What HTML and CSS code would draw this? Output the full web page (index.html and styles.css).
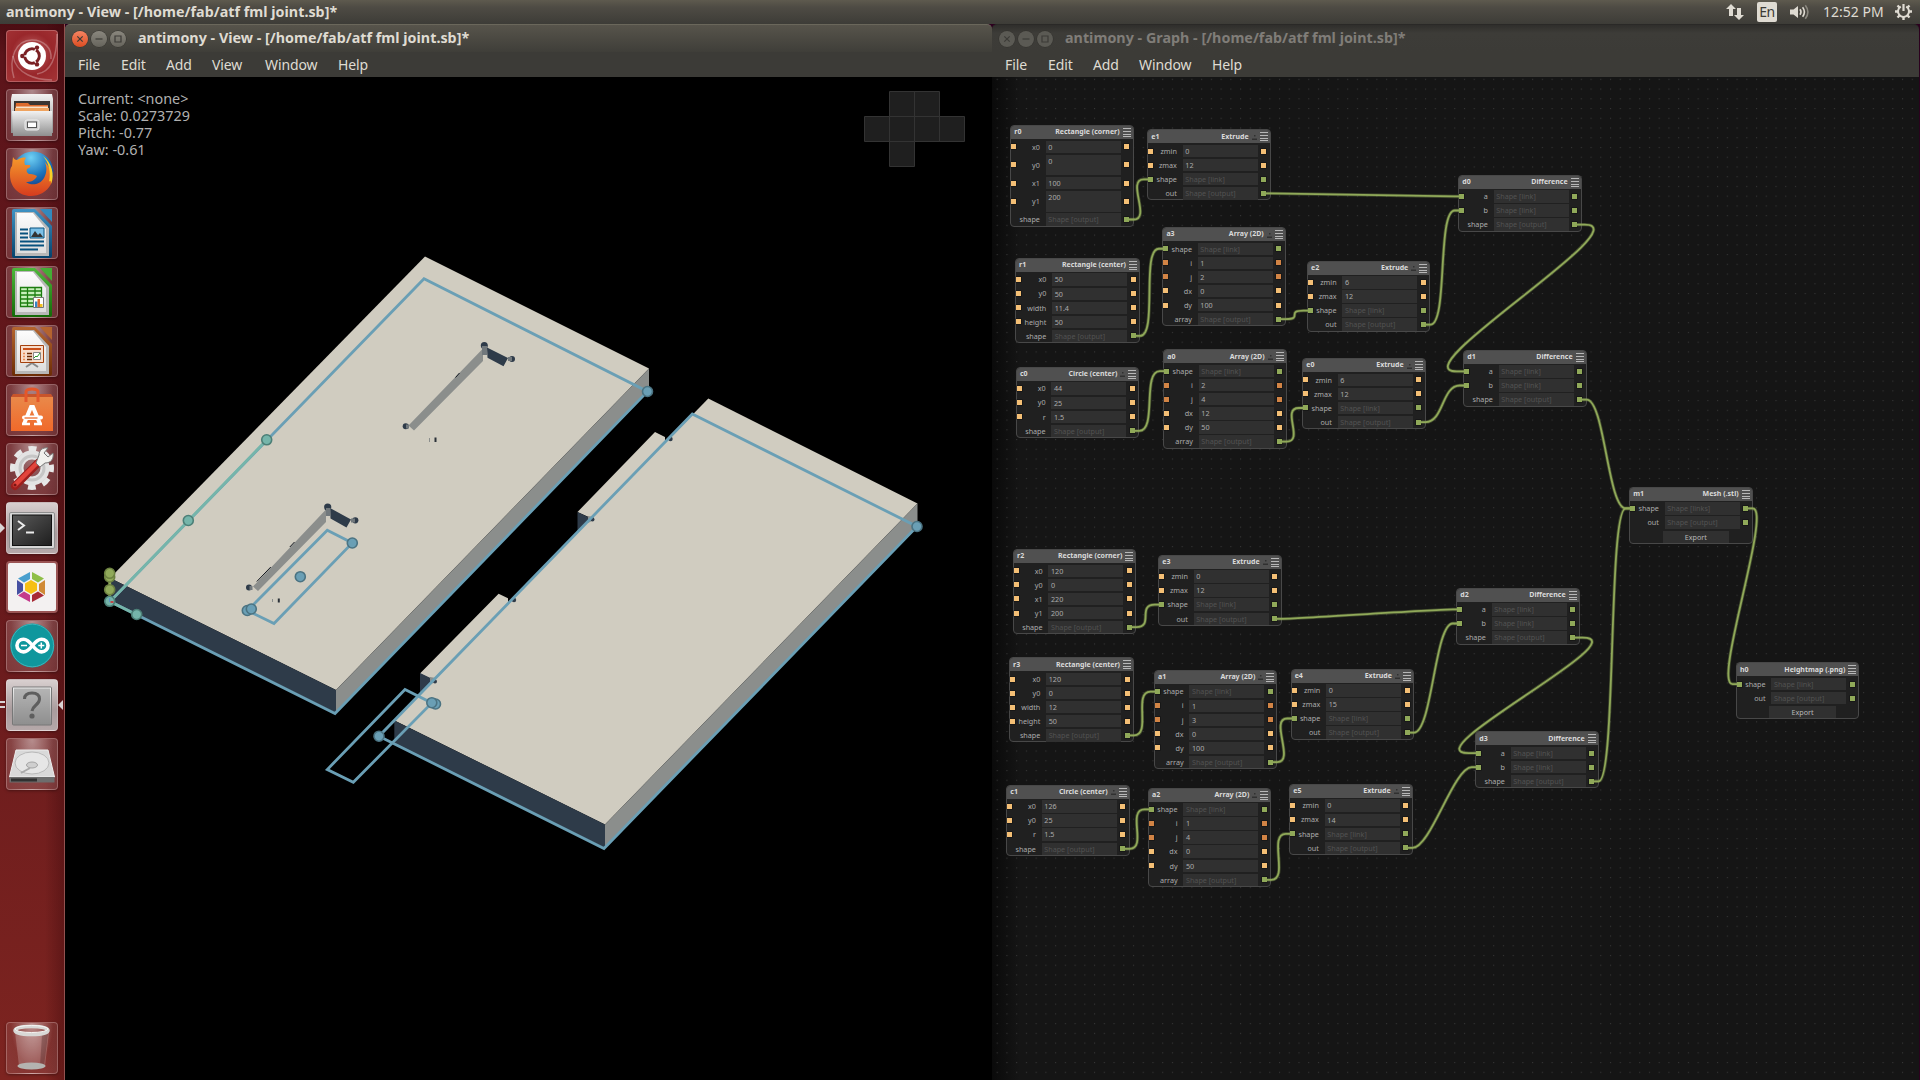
FILE: index.html
```html
<!DOCTYPE html>
<html lang="en">
<head>
<meta charset="utf-8">
<title>antimony</title>
<link rel="stylesheet" href="styles.css">
</head>
<body>
<svg class="defs" width="0" height="0" aria-hidden="true">
  <defs>
    <linearGradient id="metal" x1="0" y1="0" x2="0" y2="1"><stop offset="0" stop-color="#f2f2f2"/><stop offset="1" stop-color="#8f8f8f"/></linearGradient>
    <linearGradient id="paper" x1="0" y1="0" x2="0" y2="1"><stop offset="0" stop-color="#fdfdfd"/><stop offset="1" stop-color="#dedede"/></linearGradient>
    <linearGradient id="blue" x1="0" y1="0" x2="0" y2="1"><stop offset="0" stop-color="#3f93c4"/><stop offset="1" stop-color="#04426c"/></linearGradient>
    <linearGradient id="green" x1="0" y1="0" x2="0" y2="1"><stop offset="0" stop-color="#4db83a"/><stop offset="1" stop-color="#136a08"/></linearGradient>
    <linearGradient id="brown" x1="0" y1="0" x2="0" y2="1"><stop offset="0" stop-color="#b5652f"/><stop offset="1" stop-color="#6b2c05"/></linearGradient>
    <linearGradient id="orange" x1="0" y1="0" x2="0" y2="1"><stop offset="0" stop-color="#e9894a"/><stop offset="1" stop-color="#f0692a"/></linearGradient>
    <linearGradient id="fox" x1="0" y1="0" x2="0" y2="1"><stop offset="0" stop-color="#f59a2c"/><stop offset="1" stop-color="#d63c1e"/></linearGradient>
    <radialGradient id="globe" cx=".45" cy=".15" r=".9"><stop offset="0" stop-color="#6fd0f4"/><stop offset=".5" stop-color="#1c74bc"/><stop offset="1" stop-color="#15206a"/></radialGradient>
    <linearGradient id="screen" x1="0" y1="0" x2="1" y2="1"><stop offset="0" stop-color="#5a5a5a"/><stop offset=".5" stop-color="#3c3c3c"/><stop offset="1" stop-color="#1e1e1e"/></linearGradient>
    <pattern id="dots" x="1006.4" y="78.8" width="9.735" height="9.735" patternUnits="userSpaceOnUse"><rect width="1.1" height="1.1" fill="#363636"/></pattern>
  </defs>
</svg>

<header class="panel">
  <div class="panel-title">antimony - View - [/home/fab/atf fml joint.sb]*</div>
  <div class="indicators">
    <svg class="ind-net" width="18" height="18" viewBox="0 0 18 18"><path fill="#dfdbd2" d="M5 1l5 5H7v7H3V6H0zM13 17l5-5h-3V5h-4v7H8z"/></svg>
    <span class="ind-lang">En</span>
    <svg class="ind-vol" width="20" height="16" viewBox="0 0 20 16"><path fill="#dfdbd2" d="M0 5.500h3.500L8 2v12l-4.500-3.500H0z"/><g fill="none" stroke="#dfdbd2" stroke-width="1.600"><path d="M10 5.300q2 2.700 0 5.400"/><path d="M12.600 3.300q3.600 4.700 0 9.400"/><path stroke="#8b887f" d="M15.300 1.300q5.200 6.700 0 13.400"/></g></svg>
    <span class="clock">12:52 PM</span>
    <svg class="ind-gear" width="17" height="17" viewBox="0 0 17 17"><g fill="none" stroke="#dfdbd2"><path stroke-width="2.200" d="M8.500 1v7"/><path stroke-width="2" d="M5.800 3.600a5.500 5.500 0 1 0 5.400 0"/><path stroke-width="2.400" d="M8.500 14v3M0 8.500h3M14 8.500h3M2.500 14.500l2-2M14.500 14.500l-2-2M2.500 2.500l2 2M14.500 2.500l-2 2"/></g></svg>
  </div>
</header>

<main class="desktop">
  <nav class="launcher">
    <div class="tile tile-dash"><svg viewBox="0 0 52 52"><g fill="none" stroke="#ffffff" stroke-opacity=".28" stroke-width="1.500"><path d="M8 48C2 28 10 10 26 10c12 0 20 8 19 19"/><path d="M46 50C30 50 10 44 7 26M51 4c0 24-6 38-20 40"/></g><circle cx="26" cy="26" r="14" fill="#fff"/><circle cx="26" cy="26" r="7.300" fill="none" stroke="#7a2024" stroke-width="3"/><g stroke="#fff" stroke-width="1.300"><path d="M26 26h-10M26 26l5-9M26 26l5 9"/></g><circle cx="26" cy="26" r="5.400" fill="#fff"/><g fill="#7a2024"><circle cx="16.300" cy="26" r="2.200"/><circle cx="31" cy="17.600" r="2.200"/><circle cx="31" cy="34.400" r="2.200"/></g></svg></div>
    <div class="tile"><svg viewBox="0 0 52 52"><path d="M6 5h40l1 5v34H5V10z" fill="url(#metal)"/><path d="M8 12h36v10H8z" fill="#3a3532"/><path d="M10 14h12l2 2h18v6H9z" fill="#dd6b2d"/><path d="M10 17.500h32v4H10z" fill="#f7e3cb"/><path d="M9 19h34v3H9z" fill="#efa35f"/><path d="M6 22h40v25H7z" fill="url(#metal)"/><rect x="19" y="31" width="14" height="10" rx="2" fill="#ccc" stroke="#eee"/><rect x="21.500" y="33" width="9" height="5.500" fill="#fff" stroke="#555"/></svg></div>
    <div class="tile"><svg viewBox="0 0 52 52"><circle cx="27" cy="24" r="20.500" fill="url(#globe)"/><path fill="url(#fox)" d="M7 9c1 2 2 3 4 3 3-2 6-3 9-2-2 2-2 4-1 7h5c1 2-1 3-3 4-1 2 0 4 2 5 2 0 4 0 8 2-2 5-7 6-11 6 5 4 14 3 18-4 3-5 3-11 1-16 6 6 9 16 6 22-4 8-12 12-20 12C13 48 4 39 4 27c0-4 0-7 2-9z"/><path fill="#fbd026" d="M37 8c9 7 12 19 8 28 0-4-1-4-2-2 2-10 0-19-6-26z"/></svg></div>
    <div class="tile"><svg viewBox="0 0 52 52"><path fill="url(#blue)" d="M8 2h21l17 17v30q0 2-2 2H8q-2 0-2-2V4q0-2 2-2z"/><path fill="#3389bd" d="M34 2h12v13z"/><path fill="#b8b8b8" d="M9 5h19l15 16v28H9z"/><path fill="url(#paper)" d="M11 6h16l13 16v24H11z"/><path d="M14 22.500h8M14 26.500h8M14 30.500h8M14 34.500h24M14 38.500h24M14 42.500h18" stroke="#08527e" stroke-width="2"/><path d="M24 21h14v10H24z" fill="#7dc1e8" stroke="#08527e"/><path d="M25 30l4-6 3 4 2-2 3 4z" fill="#333"/></svg></div>
    <div class="tile"><svg viewBox="0 0 52 52"><path fill="url(#green)" d="M8 2h21l17 17v30q0 2-2 2H8q-2 0-2-2V4q0-2 2-2z"/><path fill="#44ad35" d="M34 2h12v13z"/><path fill="#b8b8b8" d="M9 5h19l15 16v28H9z"/><path fill="url(#paper)" d="M11 6h16l13 16v24H11z"/><path d="M14 21h22v20H14z" fill="#c8f0bc"/><path d="M14.500 21.500h21v19h-21zM14 25h22M14 29h22M14 33h22M14 37h22M21.500 21v20M29 21v20" fill="none" stroke="#1c7d10" stroke-width="1.300"/><path d="M27.500 31.500h10v10h-10z" fill="#fff" stroke="#777"/><path d="M29 35.500h2.500V41H29z" fill="#3585c6"/><path d="M31.500 33H34v8h-2.500z" fill="#de6a2a"/><path d="M34 38h2.500v3H34z" fill="#f2c01c"/></svg></div>
    <div class="tile"><svg viewBox="0 0 52 52"><path fill="url(#brown)" d="M8 2h21l17 17v30q0 2-2 2H8q-2 0-2-2V4q0-2 2-2z"/><path fill="#b4632f" d="M34 2h12v13z"/><path fill="#b8b8b8" d="M9 5h19l15 16v28H9z"/><path fill="url(#paper)" d="M11 6h16l13 16v24H11z"/><path d="M20 42l6-4 6 4" fill="none" stroke="#888" stroke-width="2"/><path d="M14.500 20.500h23v17h-23z" fill="#f7ddcb" stroke="#a4410e"/><path d="M17 24h18" stroke="#c9501a" stroke-width="2"/><path d="M21 28.500h5M21 31.500h5M21 34.500h5" stroke="#6b2c05" stroke-width="1.600"/><path d="M17 28.500h2M17 31.500h2M17 34.500h2" stroke="#e78a53" stroke-width="1.600"/><path d="M27.500 27.500h7v7h-7z" fill="#fff" stroke="#888"/><path d="M28 33l2-2 1 1 3-4" stroke="#2b9a2b" fill="none"/></svg></div>
    <div class="tile"><svg viewBox="0 0 52 52"><path d="M5 13h42v34H5z" fill="url(#orange)"/><path d="M5 13h42l-2-3H7z" fill="#c8542b"/><path d="M20 18V8q0-3 6-3t6 3v10" fill="none" stroke="#e4572a" stroke-width="3"/><path d="M18 40l7-17h2l7 17M21 34h10" fill="none" stroke="#fff" stroke-width="4"/><path d="M18 33.500h17" stroke="#fff" stroke-width="4" stroke-linecap="round"/><path d="M18.500 34h13" stroke="#ec6c2c" stroke-width="1.300"/><path d="M16 40h8M28 40h8" stroke="#fff" stroke-width="2.500"/></svg></div>
    <div class="tile"><svg viewBox="0 0 52 52"><circle cx="26" cy="25" r="19.500" fill="none" stroke="#e7e7e7" stroke-width="5" stroke-dasharray="8 7.300" stroke-dashoffset="4"/><circle cx="26" cy="25" r="13" fill="none" stroke="#e3e3e3" stroke-width="9"/><circle cx="26" cy="25" r="12" fill="none" stroke="#c6c6c6" stroke-width="3"/><path d="M9 43L32 20" stroke="#9d1f1d" stroke-width="8" stroke-linecap="round"/><path d="M9 42L31 20" stroke="#e2453c" stroke-width="4.500" stroke-linecap="round"/><path d="M30 20l4 4 5-4c6 0 9-4 8-10l-5 4-4-4 4-5c-6-1-9 3-9 7z" fill="#f1f1ee" stroke="#777"/><circle cx="9" cy="42" r="1.600" fill="#781614"/></svg></div>
    <div class="tile tile-lit"><svg viewBox="0 0 52 52"><rect x="3.500" y="10.500" width="45" height="36" rx="1.500" fill="#d6d6d6" stroke="#8e8e8e"/><rect x="6.500" y="13" width="39" height="30.500" fill="url(#screen)" stroke="#111"/><path d="M12 19l6 4.500-6 4.500" fill="none" stroke="#ececec" stroke-width="2"/><path d="M20 30.500h8" stroke="#ececec" stroke-width="2"/></svg><i class="run run-one"></i></div>
    <div class="tile tile-white"><svg viewBox="0 0 52 52"><path fill="#f6c015" d="M25 19l6 3.500v7L25 33l-6-3.500v-7z"/><path fill="#4a9fce" d="M24 11v7l-6 3.500L12 17.500z"/><path fill="#8fbf47" d="M26 11v7l6 3.500 6-4z"/><path fill="#4650a2" d="M11 19l6 4v7l-6 4z"/><path fill="#d08a35" d="M39 19l-6 4v7l6 4z"/><path fill="#c43a8c" d="M24 41v-7l-6-3.500-6 4z"/><path fill="#a82a35" d="M26 41v-7l6-3.500 6 4z"/></svg></div>
    <div class="tile"><svg viewBox="0 0 52 52"><circle cx="26.300" cy="25.500" r="22" fill="#0f979d"/><circle cx="26.300" cy="25.500" r="21.300" fill="none" stroke="#3fb3b8"/><path d="M26.500 25.500c-3-4-5.500-6.300-9-6.300a6.500 6.300 0 0 0 0 12.700c3.500 0 6-2.500 9-6.400 3-4 5.500-6.300 9-6.300a6.500 6.300 0 0 1 0 12.700c-3.500 0-6-2.500-9-6.400z" fill="none" stroke="#fff" stroke-width="3.600"/><path d="M15 25.500h6M32.300 25.500h6M35.300 22.500v6" stroke="#fff" stroke-width="1.500"/></svg></div>
    <div class="tile tile-lit"><svg viewBox="0 0 52 52"><rect x="6.500" y="8" width="39" height="38" rx="1" fill="url(#metal)" stroke="#777"/><rect x="8" y="9.500" width="36" height="35" fill="#8e8e8e" opacity=".6"/><path d="M18.500 20q0-6 7.500-6t7.500 6q0 3-3.500 6t-4 6" fill="none" stroke="#5e5e5e" stroke-width="3"/><circle cx="26" cy="37" r="2.600" fill="#5e5e5e"/></svg><i class="run run-two"></i><i class="run run-focus"></i></div>
    <div class="tile"><svg viewBox="0 0 52 52"><path d="M10 12h32l6.500 27h-45z" fill="#d9d9d9" stroke="#eee"/><path d="M3.500 39h45v5.500h-45z" fill="#6d6d6d"/><path d="M5 40.500h26v3H5z" fill="#303030"/><ellipse cx="26" cy="25" rx="17" ry="11" fill="#e6e6e6" stroke="#b9b9b9"/><ellipse cx="26" cy="27" rx="5.500" ry="3" fill="#cfcfcf" stroke="#a4a4a4"/><path d="M24 30l-9 5" stroke="#aaa" stroke-width="2"/></svg></div>
    <div class="tile tile-trash"><svg viewBox="0 0 52 52"><path d="M9 10h34l-4 34q-14 5-26 0z" fill="#fff" fill-opacity=".2"/><path d="M36 13l6-1-4 32h-4z" fill="#2a0a0a" fill-opacity=".25"/><ellipse cx="25.500" cy="44" rx="14" ry="3.500" fill="#b4b4b0"/><ellipse cx="25.500" cy="8.500" rx="16.500" ry="4" fill="none" stroke="#d8d8d6" stroke-width="3.500"/><ellipse cx="25.500" cy="7" rx="16.500" ry="3.500" fill="none" stroke="#f6f6f4"/></svg></div>
  </nav>

  <section class="window window-view">
    <div class="titlebar">
      <span class="btn btn-close"><svg viewBox="0 0 16 16"><path d="M5.300 5.300l5.400 5.400M10.700 5.300l-5.400 5.400"/></svg></span>
      <span class="btn"><svg viewBox="0 0 16 16"><path d="M4.500 8h7"/></svg></span>
      <span class="btn"><svg viewBox="0 0 16 16"><path d="M5 5h6v6H5z"/></svg></span>
      <h1 class="title">antimony - View - [/home/fab/atf fml joint.sb]*</h1>
    </div>
    <div class="menubar"><span class="m-file">File</span><span class="m-edit">Edit</span><span class="m-add">Add</span><span class="m-view">View</span><span class="m-window">Window</span><span>Help</span></div>
    <div class="viewport">
      <svg class="scene" width="927" height="1003" viewBox="65 77 927 1003">
        <g fill="#d0ccc0" class="solid">
          <path d="M110 578L425 256.500 649 368.500 336 690z"/>
          <path fill="#2e3b49" d="M110 578l226 112v23L110 601z"/>
          <path fill="#8b8e8c" d="M336 690l313-321.500V391L336 713z"/>
          <path d="M394.500 720.500L708.300 398.500 917.500 503.500 605 824.500z"/>
          <path fill="#2e3b49" d="M394.300 720.500L605 824.500V848L394.300 743.500z"/>
          <path fill="#8b8e8c" d="M605 824.500L917.500 503.500V527L605 848z"/>
          <path d="M655 432l10 5v8l-72 74-15.500-7zM498.600 593.700l9.400 4.500v8L435 681l-15-7.500z"/>
          <path fill="#2e3b49" d="M577.500 512l10.500 5v4.500l-10.500 11zM420 673l10.500 5v5.500L420 695z"/>
          <path fill="#8b8e8c" d="M588 516l6 1v3l-6 3zM430 677l6 1v3l-6 4z"/>
        </g>
        <g fill="#8b8e8c">
          <path d="M483 348.500V361l-69 69.500-5.500-5zM326 509.500V522l-68 69-5-4.500z"/>
        </g>
        <g fill="#2e3b49">
          <path d="M487 347.500l21 10.500-4.500 8.300-16-8.500zM330 508l21 11.500-4.500 8-16-9z"/>
          <circle cx="484.300" cy="345.500" r="3.500"/><circle cx="512" cy="359" r="3"/><circle cx="405.700" cy="426.300" r="3"/>
          <circle cx="327.700" cy="507" r="3.600"/><circle cx="355.300" cy="520.300" r="3.100"/><circle cx="249" cy="587.500" r="3"/>
          <circle cx="670.500" cy="439" r="2.200"/><circle cx="592.500" cy="519.500" r="2"/><circle cx="514" cy="600" r="2.200"/><circle cx="435" cy="681.500" r="2"/>
        </g>
        <path fill="#71787c" d="M482 346h5v9h-5zM326 508h4.500v8H326zM508 357h4v4h-4zM351 518.500h4v4h-4zM406 424.500h3v4h-3zM249.500 586h3v4h-3z"/>
        <path stroke="#10161e" d="M455.500 377.500l4-4.500M289.800 547l4.700-5M256.800 581.500l14-14.500" fill="none"/>
        <path fill="#2b3138" d="M434.500 437.500h2v4.500h-2zM277.800 598.500h2v4h-2z"/>
        <path fill="#8b8e8c" d="M429 438h1v4h-1zM272 599h1v3h-1z"/>
        <g class="guide">
          <path d="M110 601.500L335 713.500 647.500 391.500 424 278.700z"/>
          <path d="M379 736.200L604 848.500 917 526.500 692.300 414z"/>
          <path d="M327.300 530.300L352.300 543 274 623.500 247.500 610.500z"/>
          <path d="M405 689.500L431.800 703 353.300 782.300 327.300 769.500z"/>
          <path class="teal" d="M266.700 440L110 601.500l26.700 13.300"/>
          <path class="olive" d="M109.700 574v27"/>
        </g>
        <g class="handle">
          <circle cx="647.500" cy="391.500" r="5"/><circle cx="917" cy="526.500" r="5"/><circle cx="379" cy="736.200" r="5"/>
          <circle cx="300.300" cy="576.700" r="5"/><circle cx="352.300" cy="543" r="5"/><circle cx="247.300" cy="610.500" r="5"/><circle cx="251.300" cy="609" r="5"/>
          <circle cx="435.500" cy="704" r="5"/><circle cx="431.800" cy="702.700" r="5"/>
          <g class="teal"><circle cx="266.700" cy="439.800" r="5"/><circle cx="188.300" cy="520.500" r="5"/><circle cx="136.700" cy="614.500" r="5"/><circle cx="109.700" cy="601.300" r="5"/></g>
          <g class="olive"><circle cx="109.700" cy="577" r="5"/><circle cx="109.700" cy="573.300" r="5"/><circle cx="109.700" cy="589.700" r="5"/></g>
        </g>
        <path stroke="#5b8fd0" d="M109.700 598v4"/><path stroke="#c04848" stroke-width="2" d="M110.500 602h3"/>
        <g fill="#1f1f1f" stroke="#333">
          <path d="M889.500 91.500h50v25h-50zM864.500 116.500h100v25h-100zM889.500 141.500h25v25h-25zM914.500 91.500v50M889.500 116.500v25M939.500 116.500v25"/>
        </g>
      </svg>
      <div class="hud"><div>Current: &lt;none&gt;</div><div>Scale: 0.0273729</div><div>Pitch: -0.77</div><div>Yaw: -0.61</div></div>
    </div>
  </section>

  <section class="window window-graph">
    <div class="titlebar">
      <span class="btn"><svg viewBox="0 0 16 16"><path d="M5.300 5.300l5.400 5.400M10.700 5.300l-5.400 5.400"/></svg></span>
      <span class="btn"><svg viewBox="0 0 16 16"><path d="M4.500 8h7"/></svg></span>
      <span class="btn"><svg viewBox="0 0 16 16"><path d="M5 5h6v6H5z"/></svg></span>
      <h1 class="title">antimony - Graph - [/home/fab/atf fml joint.sb]*</h1>
    </div>
    <div class="menubar"><span class="m-file">File</span><span class="m-edit">Edit</span><span class="m-add">Add</span><span class="m-window">Window</span><span>Help</span></div>
    <div class="canvas" id="canvas">
      <svg class="grid" width="927" height="1003" viewBox="992 77 927 1003"><rect x="992" y="77" width="927" height="1003" fill="url(#dots)"/></svg>
      <svg class="wires" id="wires" width="927" height="1003" viewBox="992 77 927 1003"></svg>
    </div>
  </section>
</main>
<script src="graph.js"></script>
</body>
</html>
```
FILE: styles.css
```css
* { box-sizing: border-box; }
body {
  margin: 0;
  width: 1920px;
  height: 1080px;
  overflow: hidden;
  display: flex;
  flex-direction: column;
  background: #2c001e;
  font-family: "Noto Sans", "Open Sans", sans-serif;
  font-size: 14px;
  color: #dfdbd2;
}
.defs { position: absolute; }

/* top panel */
.panel {
  height: 24px;
  flex: none;
  display: flex;
  align-items: center;
  justify-content: space-between;
  padding: 0 8px 1px 6px;
  background: linear-gradient(#5e5a4e, #4e4b44 30%, #3d3c37);
}
.panel-title, .title { font-size: 14.3px; line-height: 18px; font-weight: 700; letter-spacing: 0.02px; white-space: nowrap; }
.indicators { display: flex; align-items: center; }
.ind-net { margin-right: 13px; }
.ind-lang {
  width: 20px;
  height: 20px;
  margin-right: 13px;
  border-radius: 2px;
  background: #dfdbd2;
  color: #3c3b37;
  line-height: 20px;
  text-align: center;
  letter-spacing: -0.5px;
}
.ind-vol { margin-right: 13px; }
.clock { width: 61px; margin-right: 11px; white-space: nowrap; letter-spacing: 0; }

/* desktop */
.desktop { flex: 1; display: flex; min-height: 0; }
.launcher {
  width: 65px;
  flex: none;
  display: flex;
  flex-direction: column;
  gap: 7px;
  padding: 6px 0 6px 6px;
  border-right: 1px solid #925250;
  background: linear-gradient(90deg, transparent 70%, rgba(40, 0, 5, .3)), linear-gradient(#4c0d13, #5c141a 3%, #66191c 50%, #7d2420);
}
.tile {
  position: relative;
  width: 52px;
  height: 52px;
  border: 1px solid rgba(255, 235, 235, .26);
  border-radius: 4px;
  background: radial-gradient(ellipse at 50% 0, rgba(255, 255, 255, .5), rgba(255, 255, 255, .17) 60%, rgba(255, 255, 255, .13));
  box-shadow: 0 1px 3px rgba(0, 0, 0, .35);
}
.tile > svg { display: block; width: 52px; height: 52px; margin: -1px; }
.tile-dash { background: radial-gradient(circle at 50% 45%, #c06a6a, #99272b 55%, #a33436); }
.tile-lit { background: linear-gradient(#d8cfcf, #a99c9d 60%, #b5a8a9); }
.tile-white { background: #f3f1f1; border: 2px solid #9a5454; }
.tile-white > svg { margin: -2px; }
.tile-trash { margin-top: auto; background: radial-gradient(ellipse at 50% 0, rgba(255, 255, 255, .5), rgba(255, 255, 255, .08) 60%, rgba(255, 255, 255, .1)); }
.run { position: absolute; }
.run-one { left: -7px; top: 20px; border: 5px solid transparent; border-left-color: #d9d4d4; border-right: 0; }
.run-two { left: -7px; top: 21px; width: 5px; height: 7px; border: solid #d9d4d4; border-width: 2px 0; }
.run-focus { right: -6px; top: 20px; border: 5px solid transparent; border-right-color: #d9d4d4; border-left: 0; }

/* windows */
.window { display: flex; flex-direction: column; }
.window-view { width: 927px; position: relative; z-index: 1; }
.window-graph { width: 927px; }
.titlebar {
  height: 28px;
  flex: none;
  display: flex;
  align-items: center;
  gap: 3px;
  padding: 0 7px;
  border-radius: 5px 5px 0 0;
  border-top: 1px solid #6a675b;
  background: linear-gradient(#57544b, #3f3e39);
}
.title { margin: 0 0 1px 9px; }
.btn {
  width: 16px;
  height: 16px;
  border-radius: 50%;
  background: linear-gradient(#8a877e, #66645c);
  box-shadow: 0 0 0 .5px #32312d;
}
.btn svg { display: block; fill: none; stroke: #3c3b37; stroke-width: 1.2; }
.btn-close { background: linear-gradient(#f58462, #dc4d22); }
.window-graph .titlebar { background: linear-gradient(#2f2e2b, #3d3c38 30%, #3c3b37); border-top-color: #2a2927; }
.window-graph .title { color: #807d78; }
.window-graph .btn { background: #5b5a54; }
.menubar {
  height: 25px;
  flex: none;
  display: flex;
  align-items: center;
  padding-left: 13px;
  background: #3c3b37;
  letter-spacing: -0.1px;
}
.m-file { width: 43px; }
.m-edit { width: 45px; }
.m-add { width: 46px; }
.m-view { width: 53px; }
.m-window { width: 73px; }

/* 3D viewport */
.viewport { position: relative; flex: 1; background: #000; min-height: 0; }
.scene { display: block; }
.guide path { fill: none; stroke: #6a9fb5; stroke-width: 2.8; }
.guide .teal { stroke: #75b5aa; }
.guide .olive { stroke: #90a959; }
.handle circle { fill: #6a9fb5; stroke: #4b7382; stroke-width: 1.6; }
.handle .teal circle { fill: #75b5aa; stroke: #4c7f77; }
.handle .olive circle { fill: #90a959; stroke: #6c8040; }
.hud { position: absolute; left: 13px; top: 13px; font-size: 14.4px; line-height: 17px; color: #b0b0b0; }

/* node graph */
.canvas {
  position: relative;
  flex: 1;
  min-height: 0;
  overflow: hidden;
  background: linear-gradient(90deg, #0a0a0a, #151515 28px);
}
.grid, .wires { position: absolute; left: 0; top: 0; }
.wires { z-index: 2; }
.wire-halo { fill: none; stroke: #90a959; stroke-opacity: .35; stroke-width: 3.4; }
.wire { fill: none; stroke: #90a959; stroke-width: 1.8; }
.node {
  position: absolute;
  width: 123.3px;
  border: 1px solid #484848;
  border-radius: 4px;
  background: #202020;
  font-size: 7.2px;
  line-height: 12.4px;
  color: #acacac;
}
.node-wide { width: 125px; }
.node-head {
  height: 13px;
  display: flex;
  align-items: center;
  padding: 0 2px 0 3px;
  border-radius: 3px 3px 0 0;
  background: #505050;
  color: #dadada;
  font-size: 7px;
  font-weight: 700;
}
.node-title { margin-left: auto; margin-right: 3px; }
.node-up { width: 5px; height: 6px; margin-right: 3px; fill: #303030; }
.node-menu { width: 8px; height: 9px; border: solid #b8b8b8; border-width: 1px 0; background: linear-gradient(#b8b8b8, #b8b8b8) 0 2px / 8px 1px no-repeat, linear-gradient(#b8b8b8, #b8b8b8) 0 5px / 8px 1px no-repeat; }
.node-body { padding-top: .7px; margin-bottom: -1px; }
.row { height: 14.08px; display: flex; align-items: center; }
.row-tall { height: 22.3px; }
.port { width: 5px; height: 5px; flex: none; background: currentColor; box-shadow: 0 0 0 .6px rgba(0, 0, 0, .45); }
.port-yellow { color: #f4bf75; }
.port-orange { color: #d28445; }
.port-green { color: #90a959; }
.port-none { visibility: hidden; }
.label { width: 23.6px; text-align: right; white-space: nowrap; }
.node-wide .label { width: 25.3px; }
.field {
  width: 75px;
  height: 12.4px;
  margin: 0 3.6px 0 5.7px;
  padding-left: 2.7px;
  background: #303030;
  white-space: nowrap;
}
.row-tall .field { height: 20.6px; }
.field-dim { color: #525252; }
.export { width: 66.5px; height: 12px; margin-left: 32.3px; background: #303030; text-align: center; color: #b8b8b8; }
```
FILE: graph.js
```
const SHAPES = {
  corner: v => [["x0", v[0]], ["y0", v[1]], ["x1", v[2]], ["y1", v[3]], ["shape", null, "out"]],
  center: v => [["x0", v[0]], ["y0", v[1]], ["width", v[2]], ["height", v[3]], ["shape", null, "out"]],
  circle: v => [["x0", v[0]], ["y0", v[1]], ["r", v[2]], ["shape", null, "out"]],
  extrude: v => [["zmin", v[0]], ["zmax", v[1]], ["shape", null, "link"], ["out", null, "out"]],
  array: v => [["shape", null, "link"], ["i", v[0], "int"], ["j", v[1], "int"], ["dx", v[2]], ["dy", v[3]], ["array", null, "out"]],
  diff: () => [["a", null, "link"], ["b", null, "link"], ["shape", null, "out"]],
  mesh: () => [["shape", null, "links"], ["out", null, "out"], ["export"]],
  height: () => [["shape", null, "link"], ["out", null, "out"], ["export"]]
};
const TITLES = {
  corner: "Rectangle (corner)", center: "Rectangle (center)", circle: "Circle (center)", extrude: "Extrude",
  array: "Array (2D)", diff: "Difference", mesh: "Mesh (.stl)", height: "Heightmap (.png)"
};
const HAS_UP = ["circle", "extrude", "array"];

const NODES = [
  ["r0", "corner", 1010.3, 125, ["0", "0", "100", "200"], [1, 3]],
  ["e1", "extrude", 1147.3, 129.4, ["0", "12"]],
  ["a3", "array", 1162.4, 227, ["1", "2", "0", "100"]],
  ["r1", "center", 1015, 257.9, ["50", "50", "11.4", "50"]],
  ["c0", "circle", 1016, 366.9, ["44", "25", "1.5"]],
  ["a0", "array", 1163.3, 349.4, ["2", "4", "12", "50"]],
  ["d0", "diff", 1458.3, 174.7, []],
  ["e2", "extrude", 1307, 260.7, ["6", "12"]],
  ["e0", "extrude", 1302.3, 358.1, ["6", "12"]],
  ["d1", "diff", 1463.3, 349.7, []],
  ["r2", "corner", 1013, 549.1, ["120", "0", "220", "200"]],
  ["e3", "extrude", 1158.3, 554.8, ["0", "12"]],
  ["r3", "center", 1009, 657.3, ["120", "0", "12", "50"]],
  ["a1", "array", 1154, 669.9, ["1", "3", "0", "100"]],
  ["c1", "circle", 1006.3, 784.8, ["126", "25", "1.5"]],
  ["a2", "array", 1148, 787.7, ["1", "4", "0", "50"]],
  ["d2", "diff", 1456.3, 587.7, []],
  ["e4", "extrude", 1290.7, 668.6, ["0", "15"]],
  ["e5", "extrude", 1289.3, 783.9, ["0", "14"]],
  ["d3", "diff", 1475.3, 731.4, []],
  ["m1", "mesh", 1629.3, 486.7, []],
  ["h0", "height", 1736, 662.3, []]
];

// [from node, row, to node, row]
const WIRES = [
  ["r0", 4, "e1", 2], ["r1", 4, "a3", 0], ["c0", 3, "a0", 0], ["a3", 5, "e2", 2], ["a0", 5, "e0", 2],
  ["e1", 3, "d0", 0], ["e2", 3, "d0", 1], ["d0", 2, "d1", 0], ["e0", 3, "d1", 1], ["d1", 2, "m1", 0],
  ["r2", 4, "e3", 2], ["r3", 4, "a1", 0], ["c1", 3, "a2", 0], ["a1", 5, "e4", 2], ["a2", 5, "e5", 2],
  ["e3", 3, "d2", 0], ["e4", 3, "d2", 1], ["d2", 2, "d3", 0], ["e5", 3, "d3", 1], ["d3", 2, "m1", 0],
  ["m1", 0, "h0", 0]
];

const ORIGIN = { x: 992, y: 77 };
const canvas = document.getElementById("canvas");
const centers = {};

function el(tag, cls, parent, text) {
  const e = document.createElement(tag);
  e.className = cls;
  if (text) e.textContent = text;
  parent.appendChild(e);
  return e;
}

for (const [id, kind, x, y, values, tall = []] of NODES) {
  const wide = kind === "center";
  const node = el("div", "node" + (wide ? " node-wide" : ""), canvas);
  node.style.left = x - ORIGIN.x + "px";
  node.style.top = y - ORIGIN.y + "px";
  const head = el("div", "node-head", node);
  el("span", "node-id", head, id);
  el("span", "node-title", head, TITLES[kind]);
  if (HAS_UP.includes(kind)) {
    head.insertAdjacentHTML("beforeend", '<svg class="node-up" viewBox="0 0 5 6"><path d="M2 1h1.500v1.500H2zM0 4.500h5V6H0z"/></svg>');
  }
  el("span", "node-menu", head);
  const body = el("div", "node-body", node);
  const ys = [];
  let cy = y + 14.7;
  SHAPES[kind](values).forEach(([label, value, type], i) => {
    const isTall = tall.includes(i);
    const h = isTall ? 22.3 : 14.08;
    ys.push(cy + h / 2);
    cy += h;
    const row = el("div", "row" + (isTall ? " row-tall" : ""), body);
    if (label === "export") {
      el("div", "export", row, "Export");
      return;
    }
    const dim = type && type !== "int";
    const color = !type ? "yellow" : type === "int" ? "orange" : "green";
    el("span", "port port-" + (type === "out" ? "none" : color), row);
    el("span", "label", row, label);
    el("span", "field" + (dim ? " field-dim" : ""), row, dim ? "Shape [" + (type === "out" ? "output" : type) + "]" : value);
    el("span", "port port-" + color, row);
  });
  centers[id] = { x, ys, out: x + (wide ? 118 : 116.3), in: x + 3.5 };
}

let paths = "";
for (const [from, a, to, b] of WIRES) {
  const x1 = centers[from].out, y1 = centers[from].ys[a];
  const x2 = centers[to].in, y2 = centers[to].ys[b];
  const far = x2 < x1 - 50;
  const pad = far ? 10 : 7;
  const bend = far ? 58 : x2 < x1 ? 20 : 18;
  const d = `M${x1} ${y1}H${x1 + pad}C${x1 + pad + bend} ${y1} ${x2 - pad - bend} ${y2} ${x2 - pad} ${y2}H${x2}`;
  paths += `<path class="wire-halo" d="${d}"/><path class="wire" d="${d}"/>`;
}
document.getElementById("wires").innerHTML = paths;
```
